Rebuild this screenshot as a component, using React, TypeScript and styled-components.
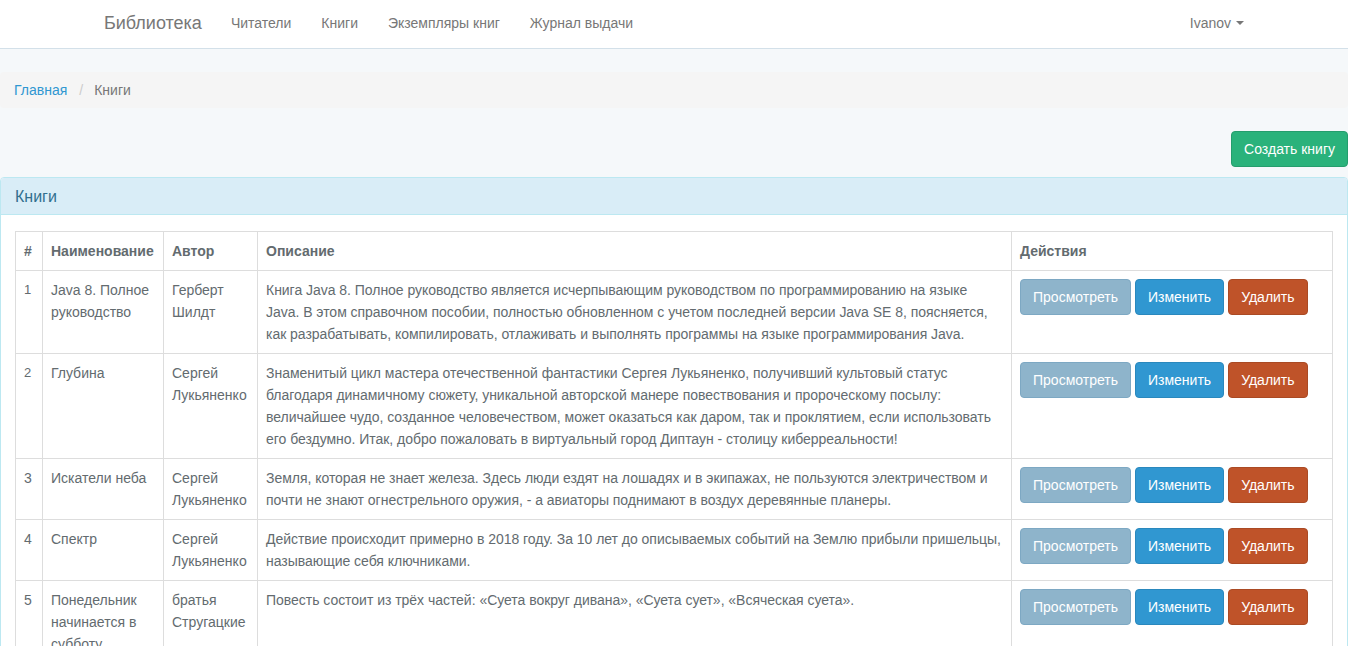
import React from 'react';
import styled, { createGlobalStyle } from 'styled-components';

const GlobalStyle = createGlobalStyle`
  html, body {
    margin: 0;
    padding: 0;
  }

  body {
    background-color: #f5f8fa;
    font-family: "Liberation Sans", Arial, sans-serif;
    font-size: 14px;
    line-height: 22px;
    color: #636b6f;
  }

  * {
    box-sizing: border-box;
  }
`;

// navbar
const Navbar = styled.nav`
  background-color: #fff;
  border-bottom: 1px solid #d3e0e9;
  height: 49px;
  margin-bottom: 23px;
`;

const NavContainer = styled.div`
  width: 1170px;
  margin: 0 auto;
  display: flex;
  align-items: stretch;
  height: 100%;
`;

const Brand = styled.a`
  display: flex;
  align-items: center;
  padding: 0 14px 3px 15px;
  font-size: 18px;
  color: #777;
  text-decoration: none;
`;

const NavList = styled.ul`
  display: flex;
  list-style: none;
  margin: 0;
  padding: 0;
  margin-left: ${({ $right }: { $right?: boolean }) => ($right ? 'auto' : '0')};
`;

const NavLink = styled.a`
  display: flex;
  align-items: center;
  gap: 5px;
  height: 100%;
  padding: 0 15px 3px;
  color: #777;
  text-decoration: none;
  font-size: 14px;
`;

const Caret = styled.span`
  display: inline-block;
  width: 0;
  height: 0;
  border-top: 4px solid #777;
  border-left: 4px solid transparent;
  border-right: 4px solid transparent;
  margin-top: 1px;
`;

// breadcrumb
const Breadcrumb = styled.ol`
  display: flex;
  list-style: none;
  margin: 0 0 23px;
  padding: 7px 14px;
  background-color: #f5f5f5;
  border-radius: 4px;
  line-height: 22px;
`;

const Crumb = styled.li`
  color: #777;

  & + &::before {
    content: '/';
    padding: 0 11px 0 12px;
    color: #ccc;
  }
`;

const CrumbLink = styled.a`
  color: #3097d1;
  text-decoration: none;
`;

// buttons
type Variant = 'success' | 'info' | 'primary' | 'danger';

const palette: Record<Variant, { bg: string, border: string }> = {
  success: { bg: '#2ab27b', border: '#259d6d' },
  info: { bg: '#8eb4cb', border: '#7da8c3' },
  primary: { bg: '#3097d1', border: '#2a88bd' },
  danger: { bg: '#bf5329', border: '#aa4a24' }
};

const Button = styled.button<{ $variant: Variant }>`
  display: inline-block;
  padding: 6px 12px;
  font-family: inherit;
  font-size: 14px;
  line-height: 22px;
  color: #fff;
  background-color: ${({ $variant }) => palette[$variant].bg};
  border: 1px solid ${({ $variant }) => palette[$variant].border};
  border-radius: 4px;
  cursor: pointer;
  white-space: nowrap;
`;

const Toolbar = styled.div`
  display: flex;
  justify-content: flex-end;
  margin-bottom: 10px;
`;

// panel
const Panel = styled.section`
  background-color: #fff;
  border: 1px solid #bce8f1;
  border-radius: 4px;
`;

const PanelHeading = styled.div`
  padding: 8px 14px 6px;
  background-color: #d9edf7;
  border-bottom: 1px solid #bce8f1;
  border-radius: 3px 3px 0 0;
  color: #31708f;
  font-size: 16px;
  line-height: 22px;
`;

const PanelBody = styled.div`
  padding: 16px 14px 15px;
`;

// table
const Table = styled.table`
  width: 100%;
  table-layout: fixed;
  border-collapse: collapse;
  border: 1px solid #ddd;
`;

const Th = styled.th<{ $w: number }>`
  width: ${({ $w }) => $w}px;
  padding: 8px;
  text-align: left;
  font-weight: bold;
  border: 1px solid #ddd;
  vertical-align: bottom;
`;

const Td = styled.td<{ $small?: boolean }>`
  padding: 8px;
  border: 1px solid #ddd;
  vertical-align: top;
  font-size: ${({ $small }) => ($small ? '13px' : '14px')};
`;

const DescriptionCell = styled(Td)`
  letter-spacing: -0.03px;
`;

const Actions = styled.div`
  display: flex;
  gap: 4px;
`;

interface Book {
  id: number,
  title: string,
  author: string,
  description: string
}

const books: Book[] = [
  {
    id: 1,
    title: 'Java 8. Полное руководство',
    author: 'Герберт Шилдт',
    description: 'Книга Java 8. Полное руководство является исчерпывающим руководством по программированию на языке Java. В этом справочном пособии, полностью обновленном с учетом последней версии Java SE 8, поясняется, как разрабатывать, компилировать, отлаживать и выполнять программы на языке программирования Java.'
  },
  {
    id: 2,
    title: 'Глубина',
    author: 'Сергей Лукьяненко',
    description: 'Знаменитый цикл мастера отечественной фантастики Сергея Лукьяненко, получивший культовый статус благодаря динамичному сюжету, уникальной авторской манере повествования и пророческому посылу: величайшее чудо, созданное человечеством, может оказаться как даром, так и проклятием, если использовать его бездумно. Итак, добро пожаловать в виртуальный город Диптаун - столицу киберреальности!'
  },
  {
    id: 3,
    title: 'Искатели неба',
    author: 'Сергей Лукьяненко',
    description: 'Земля, которая не знает железа. Здесь люди ездят на лошадях и в экипажах, не пользуются электричеством и почти не знают огнестрельного оружия, - а авиаторы поднимают в воздух деревянные планеры.'
  },
  {
    id: 4,
    title: 'Спектр',
    author: 'Сергей Лукьяненко',
    description: 'Действие происходит примерно в 2018 году. За 10 лет до описываемых событий на Землю прибыли пришельцы, называющие себя ключниками.'
  },
  {
    id: 5,
    title: 'Понедельник начинается в субботу',
    author: 'братья Стругацкие',
    description: 'Повесть состоит из трёх частей: «Суета вокруг дивана», «Суета сует», «Всяческая суета».'
  }
];

const App = () => {
  return (
    <>
      <GlobalStyle />
      <Navbar>
        <NavContainer>
          <Brand href="#">Библиотека</Brand>
          <NavList>
            <li><NavLink href="#">Читатели</NavLink></li>
            <li><NavLink href="#">Книги</NavLink></li>
            <li><NavLink href="#">Экземпляры книг</NavLink></li>
            <li><NavLink href="#">Журнал выдачи</NavLink></li>
          </NavList>
          <NavList $right>
            <li>
              <NavLink href="#">
                Ivanov <Caret />
              </NavLink>
            </li>
          </NavList>
        </NavContainer>
      </Navbar>

      <main>
        <Breadcrumb>
          <Crumb><CrumbLink href="#">Главная</CrumbLink></Crumb>
          <Crumb>Книги</Crumb>
        </Breadcrumb>

        <Toolbar>
          <Button $variant="success">Создать книгу</Button>
        </Toolbar>

        <Panel>
          <PanelHeading>Книги</PanelHeading>
          <PanelBody>
            <Table>
              <thead>
                <tr>
                  <Th $w={27}>#</Th>
                  <Th $w={121}>Наименование</Th>
                  <Th $w={94}>Автор</Th>
                  <Th $w={754}>Описание</Th>
                  <Th $w={321}>Действия</Th>
                </tr>
              </thead>
              <tbody>
                {books.map((book) => (
                  <tr key={book.id}>
                    <Td $small={book.id < 3}>{book.id}</Td>
                    <Td>{book.title}</Td>
                    <Td>{book.author}</Td>
                    <DescriptionCell>{book.description}</DescriptionCell>
                    <Td>
                      <Actions>
                        <Button $variant="info">Просмотреть</Button>
                        <Button $variant="primary">Изменить</Button>
                        <Button $variant="danger">Удалить</Button>
                      </Actions>
                    </Td>
                  </tr>
                ))}
              </tbody>
            </Table>
          </PanelBody>
        </Panel>
      </main>
    </>
  );
};

export default App;
